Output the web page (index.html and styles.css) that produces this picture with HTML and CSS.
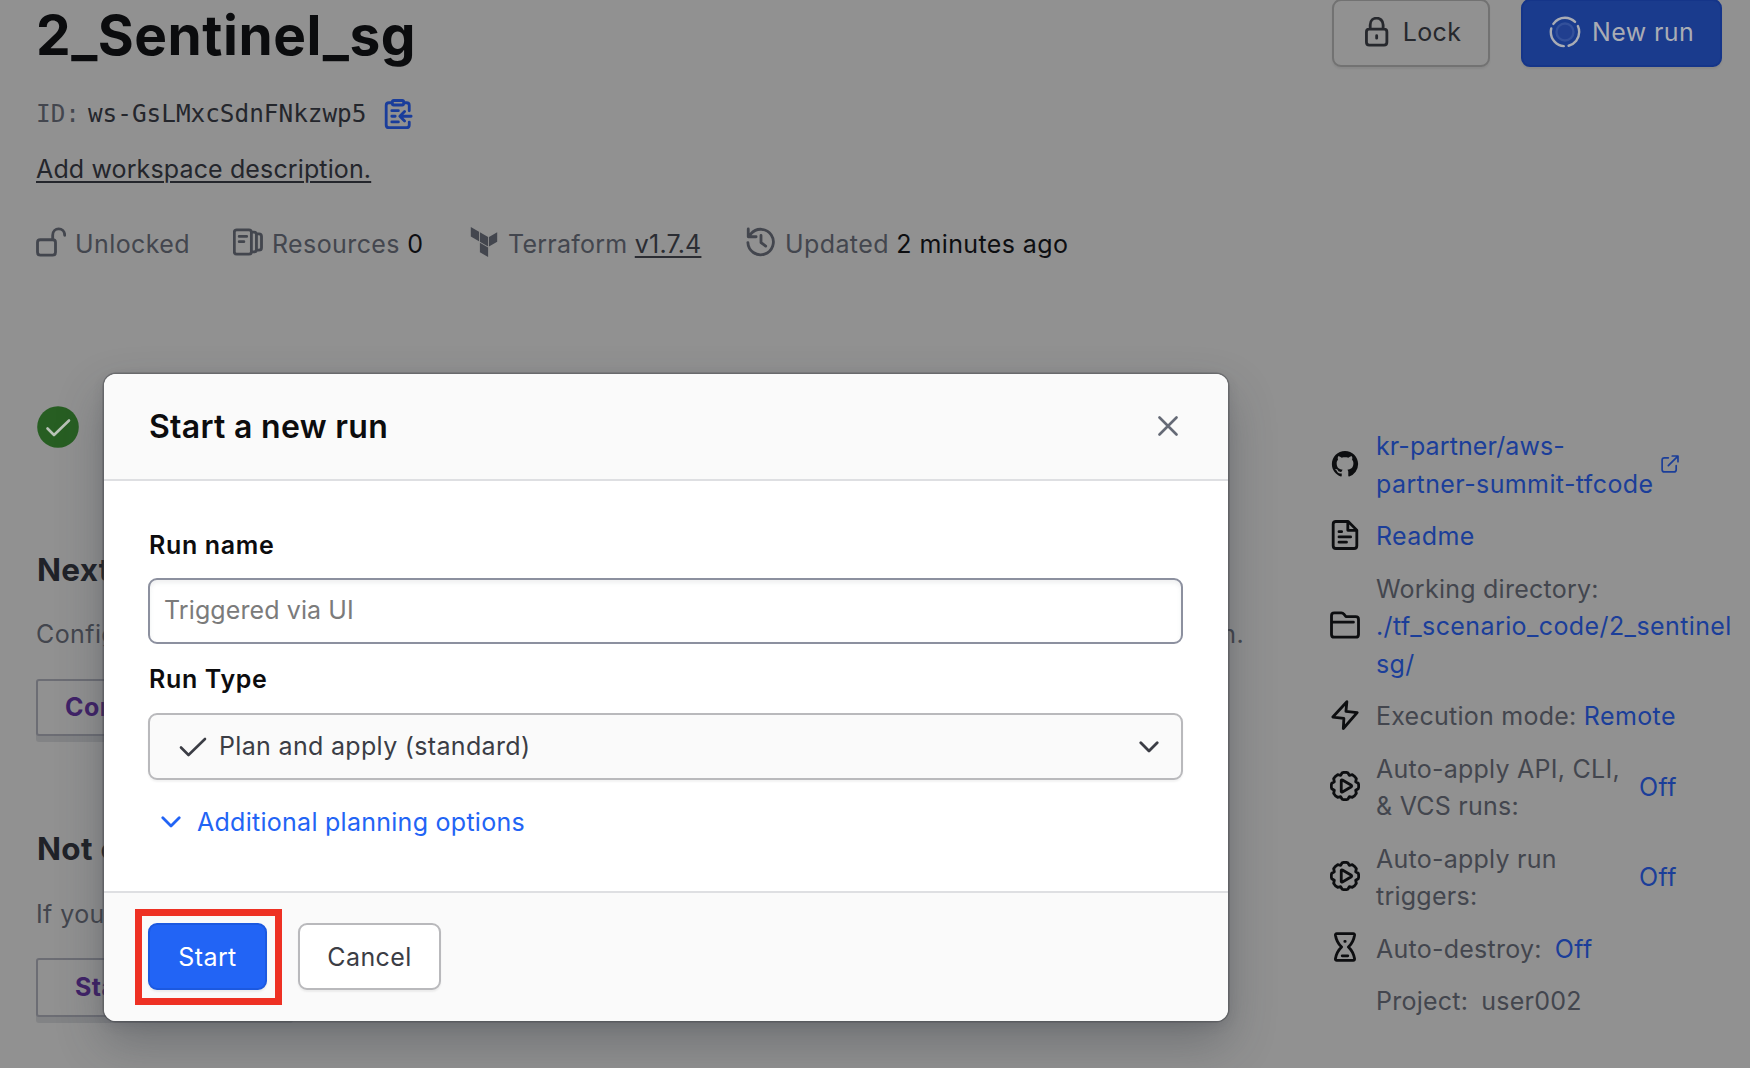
FILE: index.html
```html
<!DOCTYPE html>
<html lang="en">
<head>
<meta charset="utf-8">
<title>2_Sentinel_sg</title>
<link rel="stylesheet" href="styles.css">
</head>
<body>
<svg width="0" height="0" class="defs" aria-hidden="true">
  <symbol id="gear" viewBox="0 0 16 16">
    <g transform="translate(8 8)"><path d="M-1.5-7.05Q0-7.6 1.5-7.05L2.3-5.7 3.92-6.04Q5.3-5.3 6.04-3.92L5.7-2.3 7.05-1.5Q7.6 0 7.05 1.5L5.7 2.3 6.04 3.92Q5.3 5.3 3.92 6.04L2.3 5.7 1.5 7.05Q0 7.6-1.5 7.05L-2.3 5.7-3.92 6.04Q-5.3 5.3-6.04 3.92L-5.7 2.3-7.05 1.5Q-7.6 0-7.05-1.5L-5.7-2.3-6.04-3.92Q-5.3-5.3-3.92-6.04L-2.3-5.7Z"/><path d="M-2-2.9v5.8q.1.5.6.3L3.4.4Q3.8 0 3.4-.4L-1.4-3.2q-.5-.2-.6.3z"/></g>
  </symbol>
</svg>
<div class="page">
  <main class="workspace">
    <h1 class="title">2_Sentinel_sg</h1>
    <div class="id-row"><span class="id-label">ID:</span><span class="id-value">ws-GsLMxcSdnFNkzwp5</span>
      <svg class="icon copy" viewBox="0 0 16 16"><path d="M5 2H3.2Q1.7 2 1.7 3.5v10.3q0 1.5 1.5 1.5h9.3q1.5 0 1.5-1.5v-1.5M11 2h1.5Q14 2 14 3.5v2.8M5.7.8h4.6q.7 0 .7.7v1q0 .7-.7.7H5.7Q5 3.200 5 2.500v-1q0-.7.7-.7zM4.700 6.200h3.500M4.700 9.200h1.800M4.700 12.200h3.500M15 9.200H9.500M11.500 6.700L9 9.200l2.500 2.500"/></svg>
    </div>
    <a class="describe">Add workspace description.</a>
    <div class="meta">
      <span class="meta-item unlocked"><svg class="icon" viewBox="0 0 16 16"><path d="M2.300 6.800h6.600q1.500 0 1.500 1.500v5.200q0 1.500-1.500 1.500H2.300Q.800 15 .800 13.500V8.300q0-1.500 1.500-1.500zM8.900 6.800V4.400C8.900-.2 15.300-.2 15.300 4.400"/></svg>Unlocked</span>
      <span class="meta-item resources"><svg class="icon" viewBox="0 0 16 16"><path d="M2 1.500h6.500q1.300 0 1.300 1.300v10.400q0 1.300-1.300 1.300H2Q.700 14.500.700 13.200V2.800Q.700 1.500 2 1.500zM3.300 5h4M3.300 7.800h2.500M9.800 2.700h1.400q1.300 0 1.300 1.300v8q0 1.300-1.300 1.300H9.800M12.500 3.700h1.300q1.400 0 1.400 1.300v6q0 1.300-1.400 1.300h-1.300"/></svg>Resources <b>0</b></span>
      <span class="meta-item terraform"><svg class="icon solid" viewBox="0 0 24 24"><path d="M1.440 0v7.575l6.561 3.790V3.787zm21.120 4.227l-6.561 3.791v7.574l6.560-3.787zM8.720 4.230v7.575l6.561 3.787V8.018zm0 8.405v7.575L15.280 24v-7.578z"/></svg>Terraform <u>v1.7.4</u></span>
      <span class="meta-item updated"><svg class="icon" viewBox="0 0 16 16"><path d="M1 8.300A6.800 6.800 0 1 0 2.700 3.500L1.300 5.200M1.200 1v4.200h4.200M8 4.500V8.300l2.500 1.900"/></svg>Updated <b>2 minutes ago</b></span>
    </div>
    <svg class="status" viewBox="0 0 42 42"><circle cx="21" cy="21" r="20.800"/><path d="M10.500 22.500l6.500 6.500L32 14.500"/></svg>
    <h2 class="section next">Next</h2>
    <p class="copy-line"><span>Config</span><span>n.</span></p>
    <button class="outline first">Con</button>
    <h2 class="section later">Not c</h2>
    <p class="copy-line second"><span>If you</span></p>
    <button class="outline last">Sta</button>
  </main>
  <aside class="side">
    <div class="actions">
      <button class="btn lock"><svg class="icon" viewBox="0 0 16 16"><path d="M4.400 6.500h7.900q1.500 0 1.500 1.500v5.500q0 1.500-1.500 1.500H4.400q-1.500 0-1.500-1.500V8q0-1.500 1.500-1.500zM4.900 6.500V4.300C4.900-.6 11.800-.6 11.800 4.300v2.200M8.350 10v1.300"/></svg>Lock</button>
      <button class="btn new-run"><svg class="spinner" viewBox="0 0 32 32"><circle class="core" cx="16" cy="16" r="8.500"/><circle class="ring" cx="16" cy="16" r="14.200" pathLength="360"/></svg>New run</button>
    </div>
    <ul class="facts">
      <li><svg class="icon solid" viewBox="0 0 16 16"><path transform="translate(1 1) scale(.875)" d="M8 0C3.580 0 0 3.580 0 8c0 3.540 2.290 6.530 5.470 7.590.4.070.55-.17.55-.38 0-.19-.01-.82-.01-1.490-2.010.37-2.530-.49-2.690-.94-.09-.23-.48-.94-.82-1.130-.28-.15-.68-.52-.01-.53.63-.01 1.080.58 1.230.82.72 1.210 1.870.87 2.330.66.07-.52.28-.87.51-1.070-1.780-.2-3.640-.89-3.640-3.950 0-.87.31-1.590.82-2.150-.08-.2-.36-1.020.08-2.120 0 0 .67-.21 2.200.82.64-.18 1.320-.27 2-.27s1.360.09 2 .27c1.530-1.040 2.200-.82 2.200-.82.44 1.100.16 1.920.08 2.120.51.56.82 1.270.82 2.150 0 3.070-1.870 3.750-3.650 3.950.29.25.54.73.54 1.480 0 1.070-.01 1.930-.01 2.200 0 .21.15.46.55.38A8.010 8.010 0 0 0 16 8c0-4.420-3.580-8-8-8z"/></svg><a><span class="tight">kr-partner/aws-</span><br>partner-summit-tfcode</a><svg class="external" viewBox="0 0 16 16"><path d="M6.500 2.500H3Q1 2.500 1 4.500V13q0 2 2 2h8.500q2 0 2-2V9.500M10 .900h5.100V6M14.800 1.200L6.500 9.500"/></svg></li>
      <li><svg class="icon" viewBox="0 0 16 16"><path d="M3 .800h6.700L14.300 5.400V13.700q0 1.500-1.500 1.500H3.200q-1.500 0-1.500-1.500V2.300Q1.700.800 3.200.800M9.500 1v4.500H14M4.800 6.200h1.400M4.800 9h6.200M4.800 11.800h4"/></svg><a>Readme</a></li>
      <li><svg class="icon" viewBox="0 0 16 16"><path d="M2.300 1.500h3.800q.8 0 1.200.6L8.500 3.500h5.200q1.500 0 1.500 1.500v8q0 1.500-1.500 1.500H2.300Q.800 14.500.800 13V3Q.800 1.500 2.300 1.500zM1 6.500h11.500"/></svg><span class="clip">Working directory:<br><a>./tf_scenario_code/2_sentinel</a><br><a>sg/</a></span></li>
      <li><svg class="icon" viewBox="0 0 16 16"><path d="M9 .900L1.500 9.100l5.900.7L7.100 15.200 14.500 6.700 8.500 6.100z"/></svg><span>Execution mode: <a>Remote</a></span></li>
      <li><svg class="icon"><use href="#gear"/></svg><span class="wide">Auto-apply API, CLI,<br>&amp; VCS runs:</span><a>Off</a></li>
      <li><svg class="icon"><use href="#gear"/></svg><span class="wide">Auto-apply run<br>triggers:</span><a>Off</a></li>
      <li><svg class="icon" viewBox="0 0 16 16"><path d="M3.600.900h8.800q.8 0 .7.800Q12.500 5.500 9.800 8q2.700 2.500 3.300 6.300 0 .8-.7.800H3.600q-.8 0-.7-.8Q3.500 10.500 6.200 8 3.500 5.500 2.900 1.700 2.800.900 3.600.900zM6.500 12.700h3M7.900 5h.2"/></svg><span>Auto-destroy:</span><a class="gap">Off</a></li>
      <li><span class="icon"></span><span>Project:</span><span class="gap">user002</span></li>
    </ul>
  </aside>
</div>
<section class="modal">
  <header class="modal-head"><h2>Start a new run</h2><svg class="close" viewBox="0 0 20 20"><path d="M1.500 1.500l17 17M18.500 1.500l-17 17"/></svg></header>
  <div class="modal-body">
    <label class="label">Run name</label>
    <input class="field" placeholder="Triggered via UI">
    <label class="label type">Run Type</label>
    <div class="select"><svg class="tick" viewBox="0 0 28 20"><path d="M2 10.500l7.500 7.500L26 2"/></svg><span>Plan and apply (standard)</span><svg class="chevron" viewBox="0 0 20 12"><path d="M1.800 1.800L10 10l8.200-8.200"/></svg></div>
    <a class="more"><svg class="chevron" viewBox="0 0 20 12"><path d="M1.800 1.800L10 10l8.200-8.200"/></svg>Additional planning options</a>
  </div>
  <footer class="modal-foot"><div class="callout"><button class="btn start">Start</button></div><button class="btn cancel">Cancel</button></footer>
</section>
</body>
</html>
```
FILE: styles.css
```css
*, *::after { box-sizing: border-box; }
body {
  margin: 0;
  width: 1750px;
  height: 1068px;
  overflow: hidden;
  position: relative;
  background: #919191;
  color: #43464e;
  font: 400 25px/37.5px Inter, "Liberation Sans", sans-serif;
  letter-spacing: .4px;
}
h1, h2, p, ul { margin: 0; padding: 0; }
button, input { font: inherit; letter-spacing: inherit; }
.defs { display: block; position: absolute; }
svg { flex: none; fill: none; stroke: currentColor; stroke-width: 1.5; stroke-linecap: round; stroke-linejoin: round; }
.icon { width: 30px; height: 30px; flex: none; }
.solid { fill: currentColor; stroke: none; }

.page { display: flex; height: 1068px; }
.workspace { width: 1330px; padding: 2px 0 0 36px; display: flex; flex-direction: column; align-items: flex-start; }
.title { font-size: 55px; line-height: 66px; font-weight: 700; letter-spacing: .5px; color: #0b0c0e; }
.id-row { display: flex; height: 38px; margin-top: 27px; font: 24.35px/38px "DejaVu Sans Mono", monospace; letter-spacing: 0; }
.id-value { margin-left: 8px; color: #24262c; }
.copy { width: 30px; color: #1a3d9b; margin: 4px 0 0 17px; }
.describe { margin-top: 18px; color: #24262c; letter-spacing: .13px; text-decoration: underline; text-decoration-thickness: 2px; text-underline-offset: 3px; }
.meta { display: flex; margin-top: 37px; }
.meta-item { display: flex; align-items: center; white-space: pre; }
.meta-item .icon { margin-right: 9px; position: relative; top: -2px; }
.meta b { font-weight: 400; color: #0d0e11; }
.meta u { color: #2b2d33; letter-spacing: .2px; text-decoration-thickness: 2px; text-underline-offset: 3px; }
.unlocked { width: 197px; }
.resources { width: 236px; }
.terraform { width: 277px; letter-spacing: .25px; }
.status { width: 42px; height: 42px; margin: 142.500px 0 0 1px; stroke: #b9c3b7; stroke-width: 2.600; }
.status circle { fill: #275e22; stroke: none; }
.section { font-size: 31.500px; line-height: 40px; font-weight: 700; color: #202228; letter-spacing: .3px; padding-left: 1px; }
.next { margin-top: 102.500px; }
.copy-line { width: 1208px; margin-top: 25.500px; display: flex; justify-content: space-between; }
.outline { width: 257px; height: 57px; padding: 0; text-align: left; background: #919191; border: 2px solid #6c6d74; border-radius: 3px; box-shadow: 0 6px 0 #828385; color: #402268; font-weight: 700; }
.first { margin-top: 26px; padding-left: 27px; }
.later { margin-top: 92.500px; }
.second { margin-top: 27px; }
.last { height: 59px; margin-top: 24.500px; padding: 1px 0 0 37px; }

.side { width: 420px; }
.actions { display: flex; gap: 31px; padding-left: 2px; height: 67px; }
.btn { display: flex; align-items: center; justify-content: center; height: 67px; padding: 0; border: 2px solid; border-radius: 9px; box-shadow: 0 2px 2px rgba(0,0,0,.06); }
.lock { width: 158px; gap: 12px; background: #919191; border-color: #727272; color: #26282d; }
.lock, .new-run { height: 68px; margin-top: -1px; }
.lock .icon, .spinner { position: relative; top: -1px; }
.new-run { width: 201px; gap: 11px; background: #1a3b8d; border-color: #153589; color: #a9acb4; }
.spinner { width: 32px; height: 32px; stroke-width: 2.400; }
.core { fill: #213f8f; stroke: #33509a; }
.ring { stroke-dasharray: 100 20; stroke-dashoffset: -95; }
.facts { list-style: none; margin-top: 361px; display: flex; flex-direction: column; gap: 15px; letter-spacing: .25px; }
.facts li { display: flex; align-items: center; white-space: nowrap; }
.facts .icon { color: #0d0e10; margin-right: 16px; position: relative; top: -2px; }
.facts a { color: #1b3e99; letter-spacing: .4px; }
.tight { letter-spacing: .1px; }
.external { width: 18px; height: 18px; margin-left: 7px; color: #1b3e99; position: relative; top: -2px; }
.clip { width: 354px; overflow: hidden; }
.wide { width: 263px; }
.gap { margin-left: 13px; }

.modal { position: absolute; left: 104px; top: 373.500px; width: 1124px; height: 647px; display: flex; flex-direction: column; background: #fff; border-radius: 12px; overflow: hidden; color: #3b3d45; box-shadow: 0 0 0 1.500px rgba(60,62,68,.4), 0 22px 48px rgba(45,50,60,.32), 0 4px 12px rgba(45,50,60,.15); }
.modal-head { height: 107px; padding: 2px 50px 0 45px; display: flex; align-items: center; justify-content: space-between; background: #fafafa; border-bottom: 2px solid #dedfe2; }
.modal-head h2 { font-size: 32px; line-height: 40px; font-weight: 600; color: #0c0c0e; letter-spacing: .3px; }
.close { width: 20px; height: 20px; stroke-width: 2.600; color: #656a76; position: relative; top: -1px; }
.modal-body { flex: 1; padding: 46px 45px 0 44px; display: flex; flex-direction: column; align-items: stretch; }
.label { padding-left: 1px; font-weight: 600; color: #0c0c0e; letter-spacing: .65px; }
.field { width: 100%; height: 66px; margin-top: 14px; padding: 0 14px 2px; border: 2px solid #8c909f; border-radius: 9px; background: #fff; box-shadow: inset 0 3px 4px rgba(80,85,100,.09); outline: none; letter-spacing: .1px; }
.field::placeholder { color: #7b7b7b; opacity: 1; }
.type { margin-top: 17px; }
.select { height: 67px; margin-top: 14px; padding: 1px 22px 0 29px; display: flex; align-items: center; background: #fafafa; border: 2px solid #b9b9bc; border-radius: 9px; box-shadow: 0 2px 2px rgba(0,0,0,.05); }
.select span { margin-left: 12px; flex: 1; letter-spacing: .33px; }
.tick { width: 28px; height: 20px; stroke-width: 2.600; }
.chevron { width: 20px; height: 12px; stroke-width: 2.800; }
.more { display: flex; align-items: center; gap: 16px; margin: 24px 0 0 13px; color: #2264f5; letter-spacing: .27px; }
.modal-foot { height: 130px; padding: 30.500px 44px 0; display: flex; align-items: flex-start; gap: 31px; background: #fafafa; border-top: 2px solid #dedfe2; }
.modal-foot .btn { padding-top: 2px; }
.callout { position: relative; }
.callout::after { content: ""; position: absolute; left: -13px; top: -14px; width: 147px; height: 96px; border: 7px solid #ee3124; }
.start { width: 119px; background: #2264f5; border-color: #1c59e0; color: #fff; }
.cancel { width: 143px; background: #fff; border-color: #b9b9bc; color: #3b3d45; }
```
